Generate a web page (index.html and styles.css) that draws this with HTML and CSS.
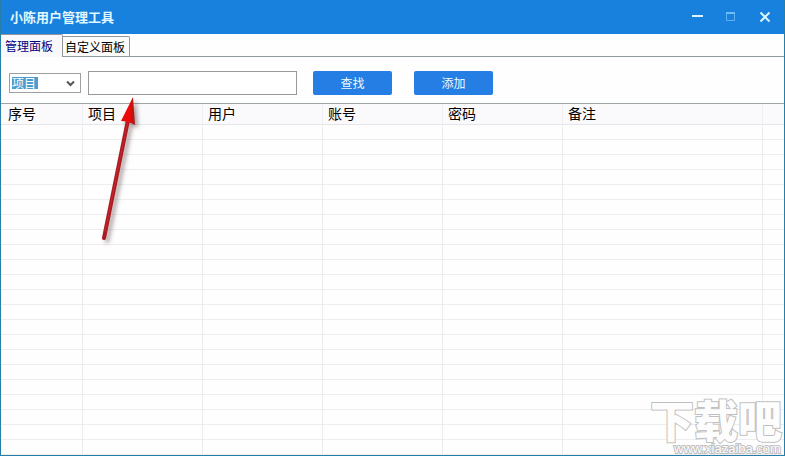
FILE: index.html
```html
<!DOCTYPE html>
<html lang="zh-CN">
<head>
<meta charset="utf-8">
<title>小陈用户管理工具</title>
<link rel="stylesheet" href="styles.css">
</head>
<body>
<div class="window">
  <header class="titlebar">
    <h1 class="title">小陈用户管理工具</h1>
    <div class="controls">
      <button class="control" type="button" aria-label="最小化"><svg width="12" height="12" viewBox="0 0 12 12"><path d="M1 5h11" stroke="#d9f6ff" stroke-width="2"/></svg></button>
      <button class="control" type="button" aria-label="最大化" disabled><svg width="12" height="12" viewBox="0 0 12 12"><path d="M1.500 1v8.500h8V1" fill="none" stroke="#5fb2f3"/><path d="M1 2h9" stroke="#6ebcf7" stroke-width="2"/></svg></button>
      <button class="control" type="button" aria-label="关闭"><svg width="12" height="12" viewBox="0 0 12 12"><path d="M1.500 1.500l9 9M10.500 1.500l-9 9" stroke="#d9f6ff" stroke-width="2"/></svg></button>
    </div>
  </header>
  <nav class="tabs">
    <button class="tab tab-active" type="button">管理面板</button>
    <button class="tab" type="button">自定义面板</button>
  </nav>
  <form class="toolbar">
    <div class="picker">
      <select class="select" aria-label="查找字段"><option>项目</option></select>
      <svg class="chevron" width="9" height="7" viewBox="0 0 9 7"><path d="M1 1.500l3.500 3.500L8 1.500" fill="none" stroke="#555" stroke-width="2"/></svg>
    </div>
    <input class="search" type="text" aria-label="关键字">
    <button class="action" type="button">查找</button>
    <button class="action" type="button">添加</button>
  </form>
  <main class="list">
    <table class="grid">
      <colgroup><col class="col-index"><col class="col"><col class="col"><col class="col"><col class="col"><col class="col-note"><col></colgroup>
      <thead><tr><th>序号</th><th>项目</th><th>用户</th><th>账号</th><th>密码</th><th>备注</th><th></th></tr></thead>
      <tbody><tr><td></td><td></td><td></td><td></td><td></td><td></td><td></td></tr></tbody>
    </table>
  </main>
  <svg class="arrow" width="48" height="154" viewBox="0 0 48 154" aria-hidden="true">
    <defs><linearGradient id="red" x1="0" x2="1"><stop offset="0" stop-color="#e01010"/><stop offset=".6" stop-color="#f20808"/><stop offset="1" stop-color="#9c1c1c"/></linearGradient></defs>
    <path d="M10 144L34 26" fill="none" stroke="#a91b22" stroke-width="4" stroke-linecap="round"/>
    <path d="M11 138L34 26" fill="none" stroke="#cb252c" stroke-width="1"/>
    <path d="M39 3L27 27Q34 27 41 31Z" fill="url(#red)"/>
  </svg>
  <svg class="watermark" width="136" height="60" viewBox="0 0 136 60" role="img" aria-label="下载吧">
    <text class="mark" x="2" y="43">下载吧</text>
    <text class="site" x="26" y="58">www.xiazaiba.com</text>
  </svg>
</div>
</body>
</html>
```
FILE: styles.css
```css
* { box-sizing: border-box; }

body {
  margin: 0;
  font: 12px/16px "Noto Sans CJK SC", sans-serif;
  color: #000;
}

button, input, select { font: inherit; }

.window {
  position: relative;
  display: flex;
  flex-direction: column;
  min-height: 100vh;
  overflow: hidden;
  background: #fefefe;
  border: 1px solid #267ea9;
  border-top: 0;
}

.titlebar {
  display: flex;
  align-items: center;
  justify-content: space-between;
  height: 34px;
  margin: 0 -1px;
  padding: 0 8px 0 10px;
  background: #1781dd;
}

.title {
  margin: 0;
  font-size: 13px;
  font-weight: 700;
  color: #e0f8ff;
}

.controls { display: flex; gap: 10px; }

.control {
  display: grid;
  place-items: center;
  width: 24px;
  height: 24px;
  padding: 0;
  background: none;
  border: 0;
}

.tabs {
  display: flex;
  align-items: flex-end;
  height: 23px;
  border-bottom: 1px solid #8e9a9e;
}

.tab {
  height: 20px;
  padding: 0 4px 0 2px;
  line-height: 18px;
  color: #000;
  background: #fcfcfc;
  border: 1px solid #92969a;
  border-bottom: 0;
  border-left: 0;
  border-radius: 0 2px 0 0;
}

.tab-active {
  height: 23px;
  margin-bottom: -1px;
  padding: 0 9px 0 4px;
  color: #00007c;
  background: #f9f9fd;
}

.toolbar {
  display: flex;
  align-items: center;
  height: 47px;
  padding: 5px 8px 0;
  border-bottom: 1px solid #9da5a5;
}

.picker { position: relative; margin-right: 7px; }

.select {
  display: block;
  width: 72px;
  height: 20px;
  padding: 0 2px;
  appearance: none;
  color: #fff;
  line-height: 16px;
  background: linear-gradient(#4b9dce, #4b9dce) 2px 3px / 26px 12px no-repeat #fff;
  border: 1px solid #a0a0a0;
  border-radius: 0;
}

.chevron {
  position: absolute;
  top: 7px;
  right: 6px;
  pointer-events: none;
}

.search {
  width: 209px;
  height: 24px;
  margin-right: 16px;
  background: #fff;
  border: 1px solid #999;
}

.action {
  width: 79px;
  height: 24px;
  margin-right: 22px;
  padding: 0;
  color: #eefaff;
  background: #257ee3;
  border: 0;
  border-radius: 2px;
}

.list {
  display: flex;
  flex: 1;
}

.grid {
  width: 100%;
  table-layout: fixed;
  border-spacing: 0;
}

.col-index { width: 82px; }
.col { width: 120px; }
.col-note { width: 200px; }

.grid th {
  height: 21px;
  padding: 0 5px;
  font-size: 14px;
  font-weight: 400;
  line-height: 18px;
  vertical-align: top;
  text-align: left;
  background: #fafafc;
  border-right: 1px solid #f0f0f4;
  border-bottom: 1px solid #e6e6e9;
}

.grid th:first-child { padding-left: 7px; }

.grid td {
  padding: 0;
  border-right: 1px solid #ececec;
}

.grid th:last-child, .grid td:last-child { border-right: 0; }

.grid tbody {
  background: repeating-linear-gradient(transparent 0 14px, #ededed 14px 15px);
}

.arrow {
  position: absolute;
  top: 94px;
  left: 93px;
  filter: drop-shadow(3px 3px 2px rgba(90, 60, 60, .5));
  pointer-events: none;
}

.watermark {
  position: absolute;
  right: 0;
  bottom: 0;
  pointer-events: none;
}

.mark, .site {
  fill: #fdfdfd;
  stroke: #c0c0c0;
  stroke-width: 2px;
  paint-order: stroke;
}

.mark {
  font: 900 44px "Noto Sans CJK SC", sans-serif;
}

.site {
  font: 400 13px "Liberation Sans", sans-serif;
}
```
